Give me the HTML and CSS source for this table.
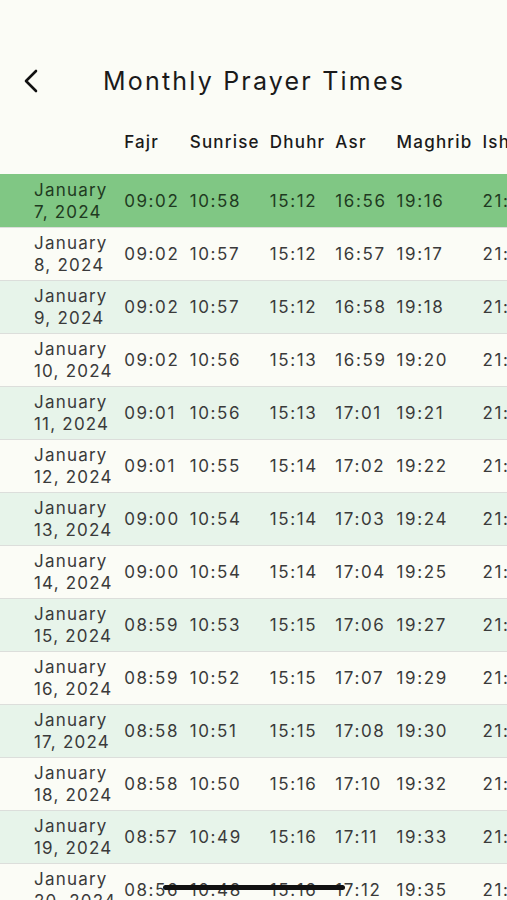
FILE: index.html
```html
<!DOCTYPE html>
<html lang="en">
<head>
    <meta charset="UTF-8">
    <meta name="viewport" content="width=device-width, initial-scale=1.0">
    <title>Monthly Prayer Times</title>
    <link rel="stylesheet" href="styles.css">
</head>
<body>
    <div class="screen">
        <header class="app-bar">
            <button class="back" aria-label="Back">
                <svg width="18" height="24" viewBox="0 0 18 24">
                    <path d="M14 2 L4 12 L14 22" fill="none" stroke="#111" stroke-width="2.6" stroke-linecap="round" stroke-linejoin="round"/>
                </svg>
            </button>
            <h1 class="title">Monthly Prayer Times</h1>
        </header>

        <table class="times">
            <thead>
                <tr>
                    <th class="date"></th>
                    <th>Fajr</th>
                    <th>Sunrise</th>
                    <th>Dhuhr</th>
                    <th>Asr</th>
                    <th>Maghrib</th>
                    <th>Isha</th>
                </tr>
            </thead>
            <tbody>
                <tr class="today">
                    <td class="date">January<br>7, 2024</td>
                    <td>09:02</td><td>10:58</td><td>15:12</td><td>16:56</td><td>19:16</td><td>21:08</td>
                </tr>
                <tr>
                    <td class="date">January<br>8, 2024</td>
                    <td>09:02</td><td>10:57</td><td>15:12</td><td>16:57</td><td>19:17</td><td>21:09</td>
                </tr>
                <tr class="alt">
                    <td class="date">January<br>9, 2024</td>
                    <td>09:02</td><td>10:57</td><td>15:12</td><td>16:58</td><td>19:18</td><td>21:10</td>
                </tr>
                <tr>
                    <td class="date">January<br>10, 2024</td>
                    <td>09:02</td><td>10:56</td><td>15:13</td><td>16:59</td><td>19:20</td><td>21:11</td>
                </tr>
                <tr class="alt">
                    <td class="date">January<br>11, 2024</td>
                    <td>09:01</td><td>10:56</td><td>15:13</td><td>17:01</td><td>19:21</td><td>21:12</td>
                </tr>
                <tr>
                    <td class="date">January<br>12, 2024</td>
                    <td>09:01</td><td>10:55</td><td>15:14</td><td>17:02</td><td>19:22</td><td>21:13</td>
                </tr>
                <tr class="alt">
                    <td class="date">January<br>13, 2024</td>
                    <td>09:00</td><td>10:54</td><td>15:14</td><td>17:03</td><td>19:24</td><td>21:14</td>
                </tr>
                <tr>
                    <td class="date">January<br>14, 2024</td>
                    <td>09:00</td><td>10:54</td><td>15:14</td><td>17:04</td><td>19:25</td><td>21:15</td>
                </tr>
                <tr class="alt">
                    <td class="date">January<br>15, 2024</td>
                    <td>08:59</td><td>10:53</td><td>15:15</td><td>17:06</td><td>19:27</td><td>21:17</td>
                </tr>
                <tr>
                    <td class="date">January<br>16, 2024</td>
                    <td>08:59</td><td>10:52</td><td>15:15</td><td>17:07</td><td>19:29</td><td>21:18</td>
                </tr>
                <tr class="alt">
                    <td class="date">January<br>17, 2024</td>
                    <td>08:58</td><td>10:51</td><td>15:15</td><td>17:08</td><td>19:30</td><td>21:19</td>
                </tr>
                <tr>
                    <td class="date">January<br>18, 2024</td>
                    <td>08:58</td><td>10:50</td><td>15:16</td><td>17:10</td><td>19:32</td><td>21:20</td>
                </tr>
                <tr class="alt">
                    <td class="date">January<br>19, 2024</td>
                    <td>08:57</td><td>10:49</td><td>15:16</td><td>17:11</td><td>19:33</td><td>21:21</td>
                </tr>
                <tr>
                    <td class="date">January<br>20, 2024</td>
                    <td>08:56</td><td>10:48</td><td>15:16</td><td>17:12</td><td>19:35</td><td>21:23</td>
                </tr>
            </tbody>
        </table>

        <div class="home-indicator"></div>
    </div>
</body>
</html>
```

FILE: styles.css
```css
html, body {
    margin: 0;
    padding: 0;
}
body {
    font-family: Inter, "Noto Sans", sans-serif;
    background-color: #fbfcf6;
    color: #3a3a3a;
}
.screen {
    position: relative;
    width: 507px;
    height: 900px;
    overflow: hidden;
}
.app-bar {
    display: flex;
    align-items: center;
    height: 56px;
    margin-top: 53px;
    padding-left: 22px;
}
.back {
    display: flex;
    align-items: center;
    justify-content: center;
    width: 18px;
    height: 24px;
    padding: 0;
    border: none;
    background: none;
}
.title {
    margin: 0 0 0 63px;
    font-size: 25px;
    font-weight: 400;
    letter-spacing: 2.2px;
    color: #1a1a1a;
}
.times {
    border-collapse: collapse;
    white-space: nowrap;
}
.times th,
.times td {
    padding: 0 10px 0 0;
    text-align: left;
    vertical-align: middle;
    font-size: 17px;
    letter-spacing: 1.6px;
}
.times th {
    height: 65px;
    font-weight: 500;
    letter-spacing: 1.2px;
    color: #1a1a1a;
}
.times td {
    height: 52px;
    border-top: 1px solid #dcdedb;
    line-height: 22px;
}
.times .date {
    padding-left: 34px;
    padding-right: 8px;
    font-size: 17px;
    letter-spacing: 1.2px;
}
.times tr.alt td {
    background-color: #e7f4ea;
}
.times tr.today td {
    background-color: #80c784;
    color: #1f3a21;
    border-top-color: #80c784;
}
.home-indicator {
    position: absolute;
    left: 163px;
    top: 885px;
    width: 182px;
    height: 5px;
    border-radius: 3px;
    background-color: #111;
}
```
